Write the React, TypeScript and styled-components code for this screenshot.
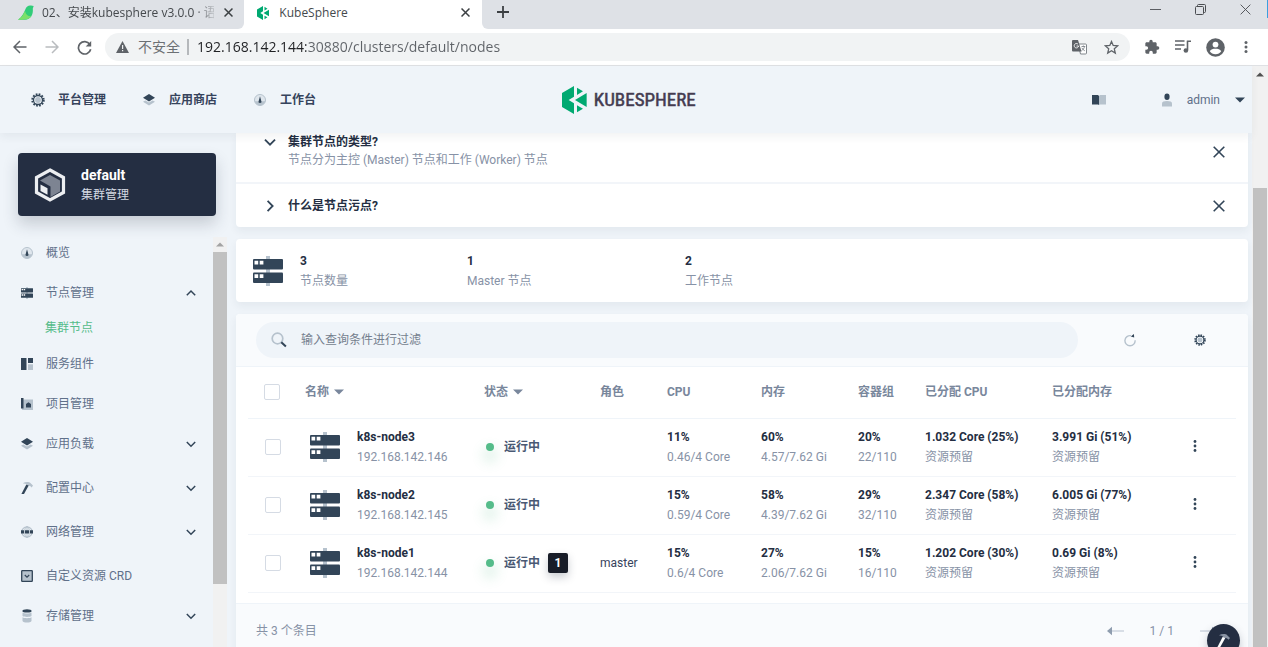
import React from "react";
import styled, { createGlobalStyle } from "styled-components";

const GlobalStyle = createGlobalStyle`
  *, *::before, *::after { box-sizing: border-box; }
  html, body, #root { height: 100%; }
  body {
    margin: 0;
    overflow: hidden;
    font-family: Roboto, "Noto Sans CJK SC", sans-serif;
    font-size: 12px;
    line-height: 20px;
    color: #36435c;
    background: #eff4f9;
  }
  button {
    display: inline-flex;
    align-items: center;
    justify-content: center;
    margin: 0;
    padding: 0;
    border: 0;
    background: none;
    font: inherit;
    color: inherit;
    cursor: pointer;
  }
  a { color: inherit; text-decoration: none; }
  svg { display: block; flex: none; }
  ul { list-style: none; margin: 0; padding: 0; }
`;

const DARK = "#324558";
const LIGHT = "#b6c2cd";

/* ---------- icons ---------- */

type IconProps = { size?: number };

const GearIcon = ({ size = 14 }: IconProps) => (
  <svg width={size} height={size} viewBox="0 0 14 14" fill="none">
    <circle cx="7" cy="7" r="5.700" stroke={DARK} strokeWidth="2" strokeDasharray="1.700 1.285" />
    <circle cx="7" cy="7" r="4.500" stroke={DARK} strokeWidth="1.300" />
    <circle cx="7" cy="7" r="2.900" fill={LIGHT} />
  </svg>
);

const LayersIcon = ({ size = 12 }: IconProps) => (
  <svg width={size} height={size} viewBox="0 0 12 12">
    <path d="M0 7.800 2.400 6.600 6 8.400l3.600-1.800L12 7.800 6 11.600z" fill={LIGHT} />
    <path d="M6 0 12 3.700 6 7.400 0 3.700z" fill={DARK} />
  </svg>
);

const GaugeIcon = ({ size = 12 }: IconProps) => (
  <svg width={size} height={size} viewBox="0 0 12 12">
    <circle cx="6" cy="6" r="5.500" fill="#dfe6ed" stroke={LIGHT} />
    <path d="M.8 7.200h10.400A5.400 5.400 0 0 1 .8 7.200z" fill={LIGHT} />
    <path d="M6 2.200 7.300 7a1.400 1.400 0 1 1-2.600 0z" fill={DARK} />
  </svg>
);

const ServerIcon = ({ size = 30 }: IconProps) => (
  <svg width={size} height={size} viewBox="0 0 30 30">
    <path d="M13 0h4v30h-4z" fill={LIGHT} />
    <rect y="3" width="30" height="10.500" rx="1" fill={DARK} />
    <rect y="16.500" width="30" height="10.500" rx="1" fill={DARK} />
    <path d="M1.500 4.700h3.700v3.700H1.500zM6.700 4.700h3.700v3.700H6.700zM1.500 18.200h3.700v3.700H1.500zM6.700 18.200h3.700v3.700H6.700z" fill="#fff" />
  </svg>
);

const ComponentsIcon = () => (
  <svg width="12" height="12" viewBox="0 0 12 12">
    <path d="M0 0h5.500v12H0zM7 0h5v5H7z" fill={DARK} />
    <path d="M7 6.300h5V12H7z" fill={LIGHT} />
  </svg>
);

const ProjectIcon = () => (
  <svg width="12" height="12" viewBox="0 0 12 12">
    <path d="M2 1.500h10V12H1z" fill={LIGHT} />
    <path d="M0 0h2.500v10.500H0zM7.400 4.200 10 6v3.600H5V6z" fill={DARK} />
  </svg>
);

const HammerIcon = ({ size = 12, head = LIGHT, handle = DARK }: IconProps & { head?: string; handle?: string }) => (
  <svg width={size} height={size} viewBox="0 0 12 12">
    <path d="M1.800 1.200C4.400-.2 8-.3 9.400 1.100L12 3.600 10.700 5.400 9.100 3.900 5 3.300 5.300 1.900z" fill={head} />
    <path d="M5.200 2.800 7.700 3.600 3 12H.4z" fill={handle} />
  </svg>
);

const GlobeIcon = () => (
  <svg width="12" height="12" viewBox="0 0 12 12" fill="none">
    <circle cx="6" cy="6" r="5.200" stroke={LIGHT} strokeWidth="1.200" />
    <ellipse cx="6" cy="6" rx="2.400" ry="5.400" stroke={LIGHT} />
    <path d="M6 .5v11" stroke={LIGHT} />
    <path d="M0 4.300h3v3.200H0zM4 4.300h4v3.200H4zM9 4.300h3v3.200H9z" fill={DARK} />
  </svg>
);

const CrdIcon = () => (
  <svg width="12" height="12" viewBox="0 0 12 12" fill="none">
    <rect x=".7" y=".7" width="10.600" height="10.600" rx=".6" fill={LIGHT} stroke={DARK} strokeWidth="1.300" />
    <path d="m3.800 5 2.200 2.200L8.200 5" stroke={DARK} strokeWidth="1.200" />
  </svg>
);

const StorageIcon = () => (
  <svg width="12" height="14" viewBox="0 0 12 14">
    <path d="M1.500 3.500c2 1.300 7 1.300 9 0V7c-2 1.200-7 1.200-9 0zM1.500 8.300c2 1.200 7 1.200 9 0V12c-1 2-8 2-9 0z" fill={LIGHT} />
    <ellipse cx="6" cy="1.900" rx="4.600" ry="1.700" fill={DARK} />
  </svg>
);

const BookIcon = () => (
  <svg width="14" height="12" viewBox="0 0 14 12">
    <path d="M0 1h6l1 1v9l-1-.5H0z" fill={DARK} />
    <path d="M7 2l1-1h6v9.500H8L7 11z" fill={LIGHT} />
  </svg>
);

const UserIcon = () => (
  <svg width="10" height="14" viewBox="0 0 10 14">
    <path d="M0 13.500V10.500C0 8.700 2 8 5 8s5 .7 5 2.500v3z" fill={LIGHT} />
    <ellipse cx="5" cy="3.800" rx="2.600" ry="3.200" fill={DARK} />
  </svg>
);

const CaretIcon = ({ color = DARK }: { color?: string }) => (
  <svg width="10" height="6" viewBox="0 0 10 6">
    <path d="M0 .5h10L5 5.500z" fill={color} />
  </svg>
);

const ChevronIcon = ({ dir, size = 10, color = DARK }: { dir: "up" | "down" | "right"; size?: number; color?: string }) => (
  <svg width={size} height={size} viewBox="0 0 10 10" fill="none" stroke={color} strokeWidth="1.500">
    <path d={dir === "up" ? "M.8 7.200 5 3l4.200 4.200" : dir === "down" ? "M.8 3 5 7.200 9.200 3" : "M3 .8 7.200 5 3 9.200"} />
  </svg>
);

const CrossIcon = ({ size = 12, color = DARK, width = 1.6 }: { size?: number; color?: string; width?: number }) => (
  <svg width={size} height={size} viewBox="0 0 12 12" stroke={color} strokeWidth={width}>
    <path d="m.7.7 10.600 10.600M11.300.7.700 11.300" />
  </svg>
);

const SearchIcon = () => (
  <svg width="16" height="16" viewBox="0 0 16 16" fill="none">
    <circle cx="6.500" cy="6.500" r="5.300" stroke={LIGHT} strokeWidth="1.700" />
    <path d="m10.300 10.300 4.600 4.300" stroke={DARK} strokeWidth="2" />
  </svg>
);

const RefreshIcon = () => (
  <svg width="12" height="14" viewBox="0 0 12 14" fill="none">
    <path d="M7 2.700A5.100 5.100 0 1 0 11.100 7.200" stroke={LIGHT} strokeWidth="1.400" />
    <path d="M6.800 3.400 9.900.900l.3 3.600z" fill={DARK} />
  </svg>
);

const MoreIcon = ({ color = DARK, r = 1.4 }: { color?: string; r?: number }) => (
  <svg width="4" height="14" viewBox="0 0 4 14" fill={color}>
    <circle cx="2" cy="2.500" r={r} />
    <circle cx="2" cy="7" r={r} />
    <circle cx="2" cy="11.500" r={r} />
  </svg>
);

const PageArrow = ({ flip }: { flip?: boolean }) => (
  <svg width="17" height="10" viewBox="0 0 17 10">
    <g transform={flip ? "matrix(-1 0 0 1 17 0)" : undefined}>
      <path d="M4 4.200h13v1.600H4z" fill="#d0d8e0" />
      <path d="M0 5 5 .8v8.400z" fill="#8f9daf" />
    </g>
  </svg>
);

const ClusterIcon = () => (
  <svg width="32" height="34" viewBox="0 0 32 34">
    <path d="M16 2 29.500 9.500v15L16 32 2.500 24.500v-15z" fill="none" stroke="#eceef1" strokeWidth="3.200" />
    <path d="M16 7 26 12.500v11L16.500 29V18.500L6 12.500z" fill="#7d8492" />
    <path d="m6.500 16.500 7 3.800v6.500l-7-3.800z" fill="#eceef1" />
  </svg>
);

const KubeMark = ({ size = 28 }: IconProps) => (
  <svg width={(size * 74) / 84} height={size} viewBox="0 0 74 84" fill="#00a971">
    <path d="M0 21 36 0v32L20 42l16 10v32L0 63z" />
    <path d="M45 5 63 16 45 27zM39 42 74 21v42zM45 58 63 68 45 79z" />
  </svg>
);

const BackIcon = ({ color = "#5f6368", flip }: { color?: string; flip?: boolean }) => (
  <svg width="14" height="14" viewBox="0 0 14 14" fill="none" stroke={color} strokeWidth="1.500">
    <path d={flip ? "M.5 7h12M7 1l6 6-6 6" : "M13.500 7h-12M7 1 1 7l6 6"} />
  </svg>
);

const ReloadIcon = () => (
  <svg width="15" height="15" viewBox="0 0 15 15">
    <path d="M12.800 4.300A6.200 6.200 0 1 0 13.700 9.200" fill="none" stroke="#5f6368" strokeWidth="1.700" />
    <path d="M14.200 1v5.500H8.700z" fill="#5f6368" />
  </svg>
);

const WarningIcon = () => (
  <svg width="13" height="12" viewBox="0 0 13 12">
    <path d="M6.500 0 13 12H0z" fill="#5f6368" />
    <path d="M6 4h1.200v4H6zM6 9h1.200v1.300H6z" fill="#f1f3f4" />
  </svg>
);

const TranslateIcon = () => (
  <svg width="15" height="15" viewBox="0 0 15 15">
    <path d="M6 4h7.500a1 1 0 0 1 1 1v8a1 1 0 0 1-1 1H8.500z" fill="#fff" stroke="#80868b" />
    <path d="M9.500 6.500h3.800M11.400 5.500v1M12.500 6.500c-.3 2-1.500 3.300-3 4.200M9.800 7.800c.7 1.300 1.700 2.300 3 3" stroke="#80868b" fill="none" strokeWidth=".9" />
    <path d="M1 0h5l3.500 11.500H1a1 1 0 0 1-1-1V1a1 1 0 0 1 1-1z" fill="#5f6368" />
    <path d="M6 4.200A2.200 2.200 0 1 0 6.600 6H4.500" stroke="#fff" fill="none" strokeWidth=".9" />
  </svg>
);

const StarIcon = () => (
  <svg width="15" height="15" viewBox="0 0 15 15" fill="none" stroke="#5f6368" strokeWidth="1.300">
    <path d="m7.500 1.500 1.700 4 4.400.4-3.300 2.900 1 4.300-3.800-2.300-3.800 2.300 1-4.300L1.400 5.900l4.400-.4z" />
  </svg>
);

const PuzzleIcon = () => (
  <svg width="16" height="16" viewBox="0 0 24 24" fill="#5f6368">
    <path d="M20.500 11H19V7c0-1.100-.9-2-2-2h-4V3.500a2.500 2.500 0 0 0-5 0V5H4c-1.100 0-2 .9-2 2v3.800h1.500a2.700 2.700 0 0 1 0 5.400H2V20c0 1.100.9 2 2 2h3.800v-1.500a2.700 2.700 0 0 1 5.400 0V22H17c1.100 0 2-.9 2-2v-4h1.500a2.500 2.500 0 0 0 0-5z" />
  </svg>
);

const PlaylistIcon = () => (
  <svg width="16" height="14" viewBox="0 0 16 14">
    <path d="M0 1h9.500M0 5h9.500M0 9h6" stroke="#5f6368" strokeWidth="1.500" />
    <path d="M12.500 1v9M11.800 1.200H16" stroke="#5f6368" strokeWidth="1.600" />
    <circle cx="10.900" cy="10.500" r="2.300" fill="#5f6368" />
  </svg>
);

const AvatarIcon = () => (
  <svg width="19" height="19" viewBox="0 0 19 19">
    <circle cx="9.500" cy="9.500" r="9.300" fill="#5f6368" />
    <circle cx="9.500" cy="6.600" r="2.900" fill="#fff" />
    <path d="M3.800 13.200c1-2 3.300-2.500 5.700-2.500s4.700.5 5.700 2.500c-1.200 2-3.300 3-5.700 3s-4.500-1-5.700-3z" fill="#fff" />
  </svg>
);

const BirdIcon = () => (
  <svg width="16" height="16" viewBox="0 0 16 16">
    <path d="M0 14.800C4 12 5.500 8.500 7.500 4c1-2.600 3-4 5.500-3.500L15.700 1l-.9 2.500c.7 6.500-2.300 11-7.800 11.300z" fill="#31cc79" />
    <path d="M0 14.800C4 12 5.500 9.500 7 6c1 4 3 5.500 6.300 5.300C11.500 14 8 15 0 14.800z" fill="#7be06a" />
  </svg>
);

const MinimizeIcon = () => (
  <svg width="11" height="11" viewBox="0 0 11 11" stroke="#5b5e63">
    <path d="M0 5.500h11" />
  </svg>
);

const RestoreIcon = () => (
  <svg width="11" height="11" viewBox="0 0 11 11" fill="none" stroke="#4a4d51">
    <rect x=".5" y="2.500" width="8" height="8" rx="1" />
    <path d="M2.500 2.500V1.500a1 1 0 0 1 1-1h6a1 1 0 0 1 1 1v6a1 1 0 0 1-1 1h-1" />
  </svg>
);

const PlusIcon = () => (
  <svg width="12" height="12" viewBox="0 0 12 12" stroke="#3c4043" strokeWidth="1.800">
    <path d="M6 0v12M0 6h12" />
  </svg>
);

/* ---------- browser frame ---------- */

const Window = styled.div`
  display: flex;
  flex-direction: column;
  height: 100vh;
  min-height: 0;
  overflow: hidden;
`;

const TabStrip = styled.div`
  position: relative;
  display: flex;
  flex: none;
  height: 29px;
  background: #dee1e6;
  font-family: "Open Sans", "Noto Sans CJK SC", sans-serif;
  color: #45494d;
  &::after {
    content: "";
    position: absolute;
    top: 0;
    right: 0;
    width: 1px;
    height: 18px;
    background: #3aa0e0;
  }
`;

const BrowserTab = styled.div<{ $active?: boolean }>`
  display: flex;
  align-items: center;
  gap: ${(p) => (p.$active ? 10 : 8)}px;
  width: ${(p) => (p.$active ? 238 : 244)}px;
  padding: ${(p) => (p.$active ? "0 11px 4px 13px" : "0 10px 4px 18px")};
  background: ${(p) => (p.$active ? "#fff" : "#dee1e6")};
  border-radius: ${(p) => (p.$active ? "0" : "0 0 6px 0")};
`;

const TabBacking = styled.div<{ $grow?: boolean }>`
  display: flex;
  flex: ${(p) => (p.$grow ? "1" : "none")};
  background: #fff;
`;

const TabTitle = styled.button<{ $fade?: boolean }>`
  flex: 1;
  min-width: 0;
  justify-content: flex-start;
  white-space: nowrap;
  ${(p) => p.$fade && "mask-image: linear-gradient(90deg, #000 calc(100% - 20px), rgba(0, 0, 0, 0.2));"}
`;

const TabStripRest = styled.div`
  display: flex;
  flex: 1;
  align-items: center;
  justify-content: space-between;
  padding: 0 17px 5px 15px;
  background: #dee1e6;
  border-radius: 0 0 0 6px;
`;

const WindowControls = styled.div`
  display: flex;
  gap: 33px;
  padding-bottom: 5px;
`;

const AddressRow = styled.div`
  display: flex;
  flex: none;
  align-items: center;
  height: 37px;
  padding: 0 16px 0 13px;
  background: #fff;
  border-bottom: 1px solid #dfe1e4;
`;

const NavButtons = styled.div`
  display: flex;
  align-items: center;
  gap: 18px;
  margin-right: 13px;
`;

const Omnibox = styled.div`
  display: flex;
  flex: 1;
  align-items: center;
  height: 28px;
  padding: 0 11px;
  border-radius: 14px;
  background: #f1f3f4;
  font-family: "Open Sans", "Noto Sans CJK SC", sans-serif;
  font-size: 14px;
  color: #6c7074;
`;

const SecurityLabel = styled.button`
  gap: 9px;
  padding-right: 7px;
  border-right: 2px solid #b5b8bb;
  line-height: 16px;
`;

const AddressInput = styled.input`
  flex: 1;
  min-width: 0;
  margin: 0;
  padding: 0 0 0 8px;
  border: 0;
  outline: 0;
  font: inherit;
  color: #5f6368;
  background: linear-gradient(90deg, #202124 117px, #5f6368 117px);
  background-clip: text;
  -webkit-text-fill-color: transparent;
`;

const OmniActions = styled.div`
  display: flex;
  gap: 17px;
`;

const BrowserActions = styled.div`
  display: flex;
  align-items: center;
  gap: 15px;
  margin-left: 14px;
`;

/* ---------- scroll bars ---------- */

const ScrollTrack = styled.div<{ $width: number }>`
  display: flex;
  flex: none;
  flex-direction: column;
  width: ${(p) => p.$width}px;
  background: #f1f1f1;
`;

const ScrollArrow = styled.button<{ $height: number }>`
  flex: none;
  height: ${(p) => p.$height}px;
`;

const ScrollOffset = styled.div`
  flex: 0 0 18%;
`;

const ScrollThumb = styled.div<{ $size: string; $inset?: boolean }>`
  flex: 0 1 ${(p) => p.$size};
  margin: ${(p) => (p.$inset ? "1px 1px 0" : "0")};
  background: #c1c1c1;
`;

const UpTriangle = ({ color }: { color: string }) => (
  <svg width="8" height="5" viewBox="0 0 8 5">
    <path d="M4 .5 8 4.500H0z" fill={color} />
  </svg>
);

/* ---------- application shell ---------- */

const Viewport = styled.div`
  display: flex;
  flex: 1;
  min-height: 0;
`;

const AppShell = styled.div`
  position: relative;
  display: flex;
  flex: 1;
  flex-direction: column;
  min-width: 0;
  background: #eff4f9;
`;

const TopBar = styled.header`
  z-index: 1;
  display: grid;
  grid-template-columns: 1fr auto 1fr;
  flex: none;
  align-items: center;
  height: 67px;
  padding-left: 6px;
  background: #eff4f9;
  box-shadow: 0 4px 8px rgba(36, 46, 66, 0.06);
`;

const TopNav = styled.nav`
  display: flex;
  gap: 36px;
  padding-left: 25px;
`;

const TopLink = styled.a`
  display: flex;
  align-items: center;
  gap: 13px;
  font-weight: 700;
  svg { width: 14px; }
`;

const Brand = styled.a`
  display: flex;
  align-items: center;
  gap: 7px;
  font-family: "Liberation Sans Narrow", "Roboto Condensed", Lato, sans-serif;
  font-size: 19px;
  color: #443b50;
  -webkit-text-stroke: 0.5px #443b50;
`;

const TopActions = styled.div`
  display: flex;
  align-items: center;
  justify-content: flex-end;
  gap: 56px;
  padding-right: 7px;
`;

const UserMenu = styled.button`
  gap: 15px;
  color: #5f708a;
`;

const Body = styled.div`
  display: flex;
  flex: 1;
  min-height: 0;
`;

const Sidebar = styled.aside`
  display: flex;
  flex: none;
  flex-direction: column;
  width: 236px;
  padding: 20px 9px 0 18px;
`;

const ClusterCard = styled.div`
  display: flex;
  flex: none;
  align-items: center;
  gap: 15px;
  margin: 0 11px 17px 0;
  padding: 12px 16px 11px;
  border-radius: 4px;
  background: #242e42;
  box-shadow: 0 8px 16px rgba(36, 46, 66, 0.2);
  color: #d5dae2;
`;

const ClusterName = styled.div`
  font-size: 14px;
  font-weight: 700;
  color: #fff;
`;

const SideNavArea = styled.div`
  display: flex;
  flex: 1;
  min-height: 0;
`;

const SideNav = styled.nav`
  flex: 1;
  min-width: 0;
  overflow: hidden;
`;

const SideScroll = styled(ScrollTrack)`
  margin-top: 4px;
`;

const SideItem = styled.li<{ $group?: boolean }>`
  margin-bottom: ${(p) => (p.$group ? 4 : 0)}px;
`;

const SideLink = styled.a`
  display: flex;
  align-items: center;
  gap: 13px;
  height: 40px;
  padding: 0 17px 0 3px;
  color: #5f708a;
`;

const SideLabel = styled.span`
  flex: 1;
`;

const SideSubLink = styled.a`
  display: block;
  padding: 5px 0 6px 27px;
  color: #55bc8a;
`;

const Main = styled.main`
  display: flex;
  flex: 1;
  flex-direction: column;
  gap: 12px;
  min-width: 0;
  margin-right: 4px;
`;

const Panel = styled.section<{ $cut?: boolean }>`
  flex: none;
  border-radius: ${(p) => (p.$cut ? "0 0 4px 4px" : "4px")};
  background: #fff;
  box-shadow: 0 4px 8px rgba(36, 46, 66, 0.06);
`;

const TipRow = styled.div<{ $open?: boolean }>`
  display: flex;
  align-items: center;
  height: ${(p) => (p.$open ? 51 : 43)}px;
  padding: ${(p) => (p.$open ? "0 23px 12px 28px" : "0 23px 0 28px")};
  border-bottom: ${(p) => (p.$open ? "2px solid #f2f5f9" : "0")};
`;

const TipBody = styled.div`
  flex: 1;
`;

const TipToggle = styled.button<{ $open?: boolean }>`
  display: flex;
  gap: 12px;
  line-height: ${(p) => (p.$open ? 16 : 20)}px;
  font-weight: 700;
  color: #242e42;
`;

const TipText = styled.p`
  margin: 0 0 0 24px;
  color: #8792a6;
`;

const SummaryPanel = styled(Panel)`
  display: grid;
  grid-template-columns: 47px 167px 218px 1fr;
  align-items: center;
  padding: 12px 17px 11px;
`;

const Strong = styled.div`
  font-weight: 700;
  color: #242e42;
`;

const Muted = styled.div`
  color: #8792a6;
`;

const TablePanel = styled(Panel)`
  overflow: hidden;
`;

const Toolbar = styled.div`
  display: flex;
  align-items: center;
  gap: 34px;
  padding: 8px 30px 8px 20px;
  background: #f9fbfd;
  border-bottom: 1px solid #eff4f9;
`;

const SearchBox = styled.label`
  display: flex;
  flex: 1;
  align-items: center;
  gap: 14px;
  height: 36px;
  padding: 0 15px;
  border-radius: 18px;
  background: #eff4f9;
`;

const SearchInput = styled.input`
  flex: 1;
  min-width: 0;
  padding: 0;
  border: 0;
  outline: 0;
  background: none;
  font: inherit;
  color: #36435c;
  &::placeholder { color: #757f8e; opacity: 1; }
`;

const IconButton = styled.button<{ $width?: number }>`
  width: ${(p) => p.$width ?? 12}px;
  height: 20px;
`;

const TableWrap = styled.div`
  padding: 0 12px 10px;
`;

const NodeTable = styled.table`
  width: 100%;
  table-layout: fixed;
  border-collapse: collapse;
  white-space: nowrap;
`;

const HeadCell = styled.th`
  height: 51px;
  padding: 0;
  border-bottom: 1px solid #eff4f9;
  text-align: left;
  font-weight: 700;
  color: #79879c;
  &:first-child { padding-left: 16px; }
`;

const Cell = styled.td`
  height: 58px;
  padding: 0;
  border-bottom: 1px solid #f2f5f9;
  &:first-child { padding-left: 17px; }
`;

const SortButton = styled.button`
  gap: 5px;
  font-weight: 700;
`;

const CheckBox = styled.input`
  appearance: none;
  display: block;
  width: 16px;
  height: 16px;
  margin: 0;
  border: 1px solid #d5dbe4;
  border-radius: 2px;
  background: #fff;
`;

const NodeName = styled.div`
  display: flex;
  align-items: center;
  gap: 17px;
  padding-left: 5px;
`;

const Status = styled.div`
  display: flex;
  align-items: center;
  font-weight: 700;
  color: #4a5974;
  &::before {
    content: "";
    width: 8px;
    height: 8px;
    margin: 0 10px 0 2px;
    border-radius: 4px;
    background: #55bc8a;
    box-shadow: 0 8px 12px 4px rgba(85, 188, 138, 0.16);
  }
`;

const TaintBadge = styled.span`
  width: 20px;
  height: 20px;
  margin-left: 8px;
  border-radius: 2px;
  background: #181d28;
  box-shadow: 0 4px 8px rgba(36, 46, 66, 0.25);
  text-align: center;
  color: #fff;
`;

const TableFooter = styled.footer`
  display: flex;
  align-items: center;
  justify-content: space-between;
  height: 55px;
  padding: 0 31px 0 20px;
  border-top: 1px solid #eff4f9;
  background: #f9fbfd;
  color: #8792a6;
`;

const Pager = styled.div`
  display: flex;
  align-items: center;
  gap: 26px;
`;

const ToolboxButton = styled.button`
  position: absolute;
  right: 12px;
  bottom: -10px;
  width: 33px;
  height: 33px;
  border-radius: 50%;
  background: #242e42;
  box-shadow: 0 4px 8px rgba(36, 46, 66, 0.25);
`;

/* ---------- data ---------- */

const topLinks = [
  { label: "平台管理", icon: <GearIcon /> },
  { label: "应用商店", icon: <LayersIcon /> },
  { label: "工作台", icon: <GaugeIcon /> },
];

const sideLinks: { label: string; icon: React.ReactNode; state?: "open" | "closed"; child?: string }[] = [
  { label: "概览", icon: <GaugeIcon /> },
  { label: "节点管理", icon: <ServerIcon size={12} />, state: "open", child: "集群节点" },
  { label: "服务组件", icon: <ComponentsIcon /> },
  { label: "项目管理", icon: <ProjectIcon /> },
  { label: "应用负载", icon: <LayersIcon />, state: "closed" },
  { label: "配置中心", icon: <HammerIcon />, state: "closed" },
  { label: "网络管理", icon: <GlobeIcon />, state: "closed" },
  { label: "自定义资源 CRD", icon: <CrdIcon /> },
  { label: "存储管理", icon: <StorageIcon />, state: "closed" },
];

const summary = [
  { value: "3", label: "节点数量" },
  { value: "1", label: "Master 节点" },
  { value: "2", label: "工作节点" },
];

const columnWidths = [57, 179, 116, 67, 94, 97, 67, 127, 127, 57];

const headings = [
  { label: "名称", sort: true },
  { label: "状态", sort: true },
  { label: "角色" },
  { label: "CPU" },
  { label: "内存" },
  { label: "容器组" },
  { label: "已分配 CPU" },
  { label: "已分配内存" },
];

const nodes = [
  {
    name: "k8s-node3", ip: "192.168.142.146", role: "", taints: 0,
    usage: [["11%", "0.46/4 Core"], ["60%", "4.57/7.62 Gi"], ["20%", "22/110"], ["1.032 Core (25%)", "资源预留"], ["3.991 Gi (51%)", "资源预留"]],
  },
  {
    name: "k8s-node2", ip: "192.168.142.145", role: "", taints: 0,
    usage: [["15%", "0.59/4 Core"], ["58%", "4.39/7.62 Gi"], ["29%", "32/110"], ["2.347 Core (58%)", "资源预留"], ["6.005 Gi (77%)", "资源预留"]],
  },
  {
    name: "k8s-node1", ip: "192.168.142.144", role: "master", taints: 1,
    usage: [["15%", "0.6/4 Core"], ["27%", "2.06/7.62 Gi"], ["15%", "16/110"], ["1.202 Core (30%)", "资源预留"], ["0.69 Gi (8%)", "资源预留"]],
  },
];

/* ---------- sections ---------- */

const BrowserFrame = () => (
  <>
    <TabStrip>
      <TabBacking>
        <BrowserTab>
          <BirdIcon />
          <TabTitle $fade>02、安装kubesphere v3.0.0 · 语</TabTitle>
          <IconButton aria-label="关闭标签页"><CrossIcon size={9} color="#3c4043" width={2} /></IconButton>
        </BrowserTab>
        <BrowserTab $active>
          <KubeMark size={14} />
          <TabTitle>KubeSphere</TabTitle>
          <IconButton aria-label="关闭标签页"><CrossIcon size={9} color="#3c4043" width={2} /></IconButton>
        </BrowserTab>
      </TabBacking>
      <TabBacking $grow>
        <TabStripRest>
          <IconButton aria-label="新标签页"><PlusIcon /></IconButton>
          <WindowControls>
            <IconButton aria-label="最小化"><MinimizeIcon /></IconButton>
            <IconButton aria-label="还原"><RestoreIcon /></IconButton>
            <IconButton aria-label="关闭"><CrossIcon size={11} color="#4a4d51" width={1} /></IconButton>
          </WindowControls>
        </TabStripRest>
      </TabBacking>
    </TabStrip>
    <AddressRow>
      <NavButtons>
        <button aria-label="后退"><BackIcon /></button>
        <button aria-label="前进"><BackIcon flip color="#b9bcbf" /></button>
        <button aria-label="重新加载"><ReloadIcon /></button>
      </NavButtons>
      <Omnibox>
        <SecurityLabel><WarningIcon />不安全</SecurityLabel>
        <AddressInput aria-label="地址" defaultValue="192.168.142.144:30880/clusters/default/nodes" />
        <OmniActions>
          <button aria-label="翻译"><TranslateIcon /></button>
          <button aria-label="收藏"><StarIcon /></button>
        </OmniActions>
      </Omnibox>
      <BrowserActions>
        <button aria-label="扩展程序"><PuzzleIcon /></button>
        <button aria-label="媒体"><PlaylistIcon /></button>
        <button aria-label="用户"><AvatarIcon /></button>
        <IconButton aria-label="菜单"><MoreIcon color="#5f6368" r={1.5} /></IconButton>
      </BrowserActions>
    </AddressRow>
  </>
);

const SideMenu = () => (
  <Sidebar>
    <ClusterCard>
      <ClusterIcon />
      <div>
        <ClusterName>default</ClusterName>
        <div>集群管理</div>
      </div>
    </ClusterCard>
    <SideNavArea>
      <SideNav>
        <ul>
          {sideLinks.map((link) => (
            <SideItem key={link.label} $group={link.state === "closed"}>
              <SideLink href="#">
                {link.icon}
                <SideLabel>{link.label}</SideLabel>
                {link.state && <ChevronIcon dir={link.state === "open" ? "up" : "down"} />}
              </SideLink>
              {link.child && <SideSubLink href="#">{link.child}</SideSubLink>}
            </SideItem>
          ))}
        </ul>
      </SideNav>
      <SideScroll $width={14}>
        <ScrollArrow $height={15} aria-label="向上滚动"><UpTriangle color="#a3a3a3" /></ScrollArrow>
        <ScrollThumb $size="81%" />
      </SideScroll>
    </SideNavArea>
  </Sidebar>
);

const NodesTable = () => (
  <NodeTable>
    <colgroup>
      {columnWidths.map((width, i) => <col key={i} width={width} />)}
    </colgroup>
    <thead>
      <tr>
        <HeadCell><CheckBox type="checkbox" aria-label="全选" /></HeadCell>
        {headings.map((h) => (
          <HeadCell key={h.label}>
            {h.sort ? <SortButton>{h.label}<CaretIcon color="#79879c" /></SortButton> : h.label}
          </HeadCell>
        ))}
        <HeadCell />
      </tr>
    </thead>
    <tbody>
      {nodes.map((node) => (
        <tr key={node.name}>
          <Cell><CheckBox type="checkbox" aria-label={node.name} /></Cell>
          <Cell>
            <NodeName>
              <ServerIcon />
              <div>
                <Strong as="a" href="#">{node.name}</Strong>
                <Muted>{node.ip}</Muted>
              </div>
            </NodeName>
          </Cell>
          <Cell>
            <Status>运行中{node.taints > 0 && <TaintBadge>{node.taints}</TaintBadge>}</Status>
          </Cell>
          <Cell>{node.role}</Cell>
          {node.usage.map(([value, detail], i) => (
            <Cell key={i}>
              <Strong>{value}</Strong>
              <Muted>{detail}</Muted>
            </Cell>
          ))}
          <Cell><IconButton $width={32} aria-label="更多操作"><MoreIcon /></IconButton></Cell>
        </tr>
      ))}
    </tbody>
  </NodeTable>
);

export default function App() {
  return (
    <Window>
      <GlobalStyle />
      <BrowserFrame />
      <Viewport>
        <AppShell>
          <TopBar>
            <TopNav>
              {topLinks.map((link) => <TopLink href="#" key={link.label}>{link.icon}{link.label}</TopLink>)}
            </TopNav>
            <Brand href="#"><KubeMark />KUBESPHERE</Brand>
            <TopActions>
              <button aria-label="文档"><BookIcon /></button>
              <UserMenu><UserIcon />admin<CaretIcon /></UserMenu>
            </TopActions>
          </TopBar>
          <Body>
            <SideMenu />
            <Main>
              <Panel $cut>
                <TipRow $open>
                  <TipBody>
                    <TipToggle $open aria-expanded="true"><ChevronIcon dir="down" size={12} />集群节点的类型?</TipToggle>
                    <TipText>节点分为主控 (Master) 节点和工作 (Worker) 节点</TipText>
                  </TipBody>
                  <IconButton aria-label="关闭"><CrossIcon /></IconButton>
                </TipRow>
                <TipRow>
                  <TipBody>
                    <TipToggle aria-expanded="false"><ChevronIcon dir="right" size={12} />什么是节点污点?</TipToggle>
                  </TipBody>
                  <IconButton aria-label="关闭"><CrossIcon /></IconButton>
                </TipRow>
              </Panel>
              <SummaryPanel>
                <ServerIcon />
                {summary.map((item) => (
                  <div key={item.label}>
                    <Strong>{item.value}</Strong>
                    <Muted>{item.label}</Muted>
                  </div>
                ))}
              </SummaryPanel>
              <TablePanel>
                <Toolbar>
                  <SearchBox>
                    <SearchIcon />
                    <SearchInput type="text" aria-label="过滤" placeholder="输入查询条件进行过滤" />
                  </SearchBox>
                  <IconButton $width={36} aria-label="刷新"><RefreshIcon /></IconButton>
                  <IconButton $width={36} aria-label="设置"><GearIcon size={12} /></IconButton>
                </Toolbar>
                <TableWrap><NodesTable /></TableWrap>
                <TableFooter>
                  <span>共 3 个条目</span>
                  <Pager>
                    <button aria-label="上一页"><PageArrow /></button>
                    <span>1 / 1</span>
                    <button aria-label="下一页"><PageArrow flip /></button>
                  </Pager>
                </TableFooter>
              </TablePanel>
            </Main>
          </Body>
          <ToolboxButton aria-label="工具箱"><HammerIcon size={13} head="#8a93a3" handle="#fff" /></ToolboxButton>
        </AppShell>
        <ScrollTrack $width={16}>
          <ScrollArrow $height={16} aria-label="向上滚动"><UpTriangle color="#505050" /></ScrollArrow>
          <ScrollOffset />
          <ScrollThumb $size="100%" $inset />
        </ScrollTrack>
      </Viewport>
    </Window>
  );
}
